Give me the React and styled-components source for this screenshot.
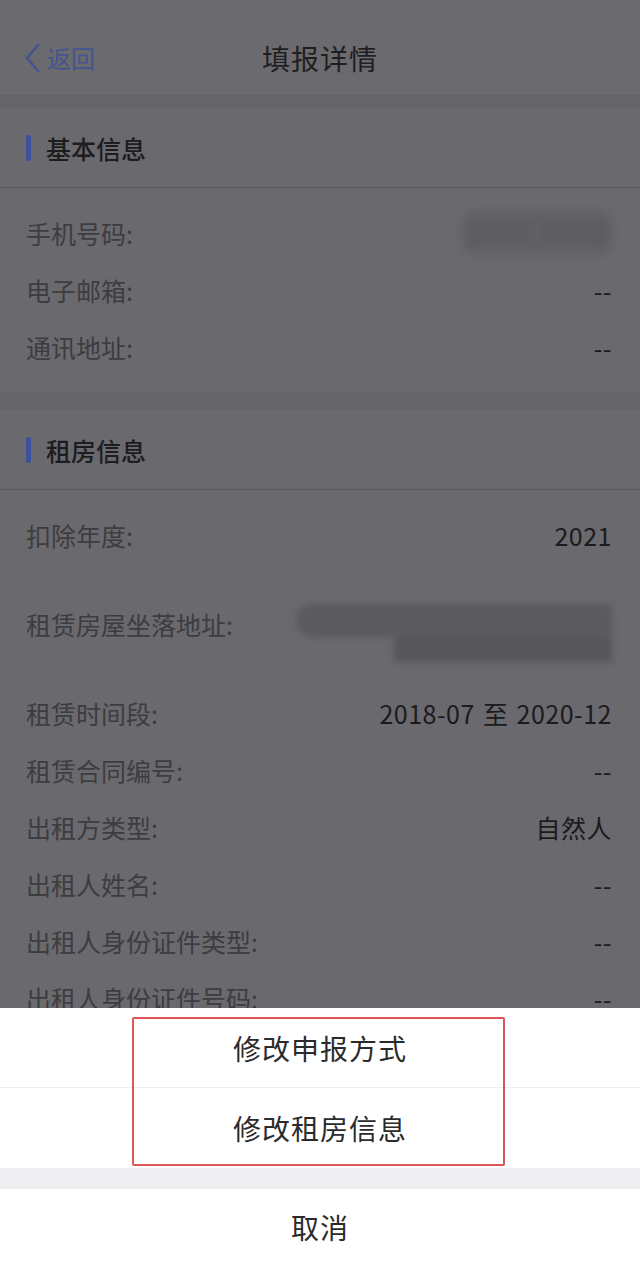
import React from "react";
import styled, { createGlobalStyle } from "styled-components";

const GlobalStyle = createGlobalStyle`
  html, body {
    margin: 0;
    padding: 0;
    background: #6a696d;
  }
  body {
    font-family: "Noto Sans CJK SC", "Noto Sans", sans-serif;
  }
  * {
    box-sizing: border-box;
  }
`;

const basicRows = [
  { id: 1, label: "手机号码:", blur: "phone" },
  { id: 2, label: "电子邮箱:", value: "--" },
  { id: 3, label: "通讯地址:", value: "--" },
];

const rentRows = [
  { id: 1, label: "扣除年度:", value: "2021" },
  { id: 2, label: "租赁房屋坐落地址:", blur: "address" },
  { id: 3, label: "租赁时间段:", value: "2018-07 至 2020-12" },
  { id: 4, label: "租赁合同编号:", value: "--" },
  { id: 5, label: "出租方类型:", value: "自然人" },
  { id: 6, label: "出租人姓名:", value: "--" },
  { id: 7, label: "出租人身份证件类型:", value: "--" },
  { id: 8, label: "出租人身份证件号码:", value: "--" },
];

function Row({ item }) {
  return (
    <RowStyled $tall={item.blur === "address"}>
      <Label>{item.label}</Label>
      {item.blur === "phone" && (
        <PhoneBlur>
          <span />
          <span />
        </PhoneBlur>
      )}
      {item.blur === "address" && (
        <AddressBlur>
          <div className="line line1" />
          <div className="line line2" />
        </AddressBlur>
      )}
      {item.value && <Value>{item.value}</Value>}
    </RowStyled>
  );
}

export default function App() {
  return (
    <>
      <GlobalStyle />
      <Screen>
        <NavBar>
          <BackButton>
            <svg width="18" height="30" viewBox="0 0 18 30">
              <polyline
                points="15,2 4,15 15,28"
                fill="none"
                stroke="#43548f"
                strokeWidth="2.6"
                strokeLinecap="round"
                strokeLinejoin="round"
              />
            </svg>
            <span>返回</span>
          </BackButton>
          <Title>填报详情</Title>
        </NavBar>

        <Section $bottom={17}>
          <SectionHeader>
            <i />
            <h3>基本信息</h3>
          </SectionHeader>
          <RowList>
            {basicRows.map((item) => (
              <Row item={item} key={item.id} />
            ))}
          </RowList>
        </Section>

        <Section $bottom={0}>
          <SectionHeader>
            <i />
            <h3>租房信息</h3>
          </SectionHeader>
          <RowList>
            {rentRows.map((item) => (
              <Row item={item} key={item.id} />
            ))}
          </RowList>
        </Section>

        <ActionSheet>
          <SheetGroup>
            <SheetItem>修改申报方式</SheetItem>
            <SheetItem>修改租房信息</SheetItem>
          </SheetGroup>
          <SheetGap />
          <SheetItem $cancel>取消</SheetItem>
          <Highlight />
        </ActionSheet>
      </Screen>
    </>
  );
}

const Screen = styled.div`
  position: relative;
  width: 640px;
  height: 1266px;
  overflow: hidden;
  background: #656468;
`;

const NavBar = styled.header`
  position: relative;
  height: 96px;
  padding-top: 20px;
  display: flex;
  align-items: center;
  justify-content: center;
  background: #6b6a6e;
  border-bottom: 1px solid #636266;
  margin-bottom: 12px;
`;

const BackButton = styled.div`
  position: absolute;
  left: 23px;
  top: 20px;
  bottom: 0;
  display: flex;
  align-items: center;
  gap: 6px;
  color: #43548f;
  font-size: 24px;

  span {
    line-height: 1;
  }
`;

const Title = styled.h1`
  margin: 0;
  font-size: 28px;
  font-weight: 400;
  color: #1f1f21;
  letter-spacing: 1px;
`;

const Section = styled.section`
  background: #6a696d;
  padding-bottom: ${(p) => p.$bottom}px;
  margin-bottom: 18px;
`;

const SectionHeader = styled.div`
  height: 80px;
  display: flex;
  align-items: center;
  gap: 15px;
  padding-left: 26px;
  border-bottom: 1px solid #59585c;

  i {
    display: block;
    width: 5px;
    height: 26px;
    border-radius: 2px;
    background: #3b519e;
  }

  h3 {
    margin: 0;
    font-size: 25px;
    font-weight: 500;
    color: #1d1d1f;
  }
`;

const RowList = styled.div`
  padding-top: 16px;
`;

const RowStyled = styled.div`
  height: ${(p) => (p.$tall ? 121 : 57)}px;
  display: flex;
  align-items: center;
  justify-content: space-between;
  padding: 0 28px 0 26px;
  position: relative;
`;

const Label = styled.span`
  font-size: 25px;
  color: #3d3c40;
`;

const Value = styled.span`
  font-size: 25px;
  color: #1b1b1d;
  letter-spacing: 0.5px;
  word-spacing: 2px;
`;

const PhoneBlur = styled.div`
  width: 150px;
  height: 44px;
  display: flex;
  filter: blur(4px);
  border-radius: 12px;
  overflow: hidden;
  background: #626165;

  span {
    flex: 1;
    background: #5e5d61;
    margin: 8px 4px;
  }
`;

const AddressBlur = styled.div`
  width: 316px;
  height: 60px;
  display: flex;
  flex-direction: column;
  align-items: flex-end;
  filter: blur(3px);
  margin-top: 20px;

  .line {
    background: #5b5a5e;
  }
  .line1 {
    width: 100%;
    height: 33px;
    border-radius: 16px 0 0 16px;
  }
  .line2 {
    width: 218px;
    height: 25px;
    background: #57565a;
  }
`;

const ActionSheet = styled.div`
  position: absolute;
  left: 0;
  right: 0;
  bottom: 0;
  height: 258px;
  background: #fff;
  display: flex;
  flex-direction: column;
`;

const SheetGroup = styled.div`
  display: flex;
  flex-direction: column;

  & > div:first-child {
    border-bottom: 1px solid #eeeeee;
  }
`;

const SheetItem = styled.div`
  height: ${(p) => (p.$cancel ? 76 : 80)}px;
  display: flex;
  align-items: center;
  justify-content: center;
  font-size: 28px;
  color: #2b2b2b;
  letter-spacing: 1px;
  background: #fff;
`;

const SheetGap = styled.div`
  height: 21px;
  background: #efeff2;
`;

const Highlight = styled.div`
  position: absolute;
  left: 132px;
  top: 9px;
  width: 373px;
  height: 149px;
  border: 2px solid #dd5557;
  border-radius: 2px;
  pointer-events: none;
`;
